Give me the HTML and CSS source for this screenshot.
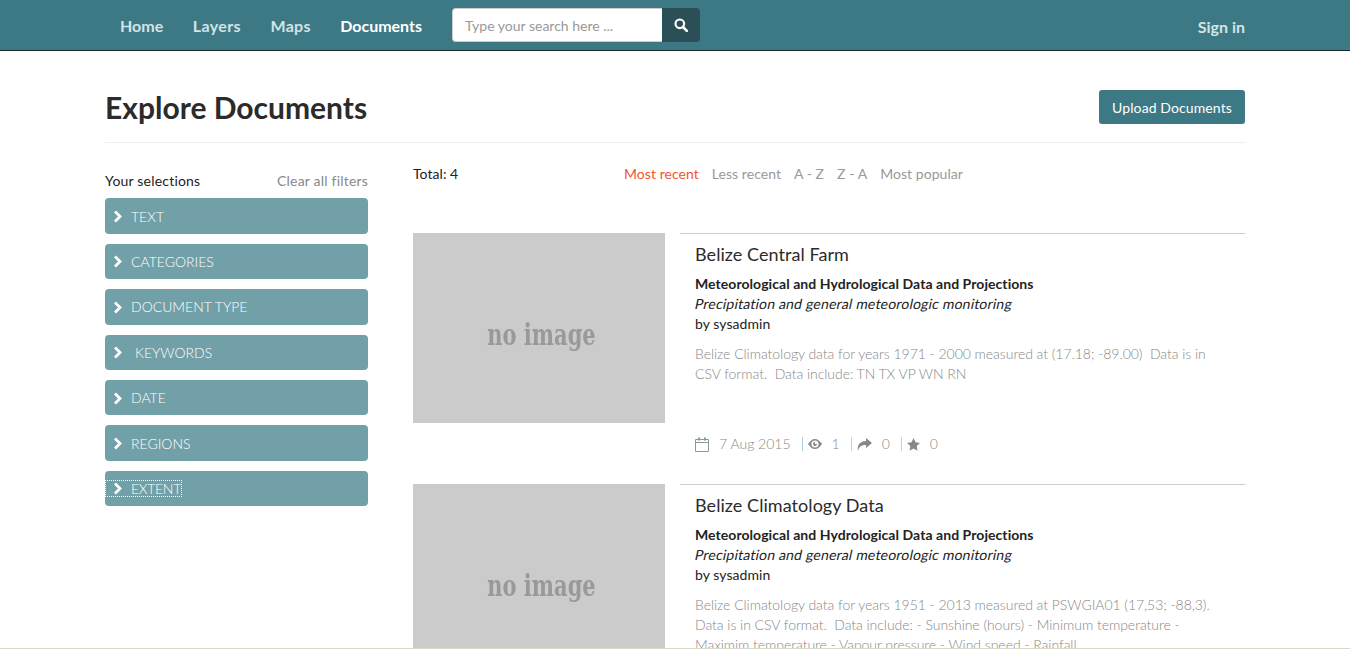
FILE: index.html
```html
<!DOCTYPE html>
<html lang="en">

<head>
    <meta charset="utf-8">
    <title>Explore Documents</title>
    <link rel="stylesheet" href="styles.css">
</head>

<body>
    <header class="topbar">
        <nav class="nav">
            <a href="#">Home</a>
            <a href="#">Layers</a>
            <a href="#">Maps</a>
            <a href="#" class="active">Documents</a>
        </nav>
        <form class="search">
            <input type="text" placeholder="Type your search here ...">
            <button type="button" aria-label="Search">
                <svg width="14" height="14" viewBox="0 0 14 14"><circle cx="5.8" cy="5.8" r="4.3" fill="none" stroke="#fff" stroke-width="2.2"/><path d="M9 9l3.8 3.8" stroke="#fff" stroke-width="2.6" stroke-linecap="round"/></svg>
            </button>
        </form>
        <a href="#" class="signin">Sign in</a>
    </header>

    <main class="page">
        <div class="page-head">
            <h1>Explore Documents</h1>
            <a href="#" class="upload">Upload Documents</a>
        </div>

        <div class="columns">
            <aside class="filters">
                <div class="filters-head">
                    <span>Your selections</span>
                    <a href="#">Clear all filters</a>
                </div>
                <a href="#" class="filter"><svg class="chev" width="10" height="13" viewBox="0 0 10 13"><path d="M2 1.500l5 5-5 5" fill="none" stroke="#fff" stroke-width="2.800"/></svg><span>TEXT</span></a>
                <a href="#" class="filter"><svg class="chev" width="10" height="13" viewBox="0 0 10 13"><path d="M2 1.500l5 5-5 5" fill="none" stroke="#fff" stroke-width="2.800"/></svg><span>CATEGORIES</span></a>
                <a href="#" class="filter"><svg class="chev" width="10" height="13" viewBox="0 0 10 13"><path d="M2 1.500l5 5-5 5" fill="none" stroke="#fff" stroke-width="2.800"/></svg><span>DOCUMENT TYPE</span></a>
                <a href="#" class="filter wide"><svg class="chev" width="10" height="13" viewBox="0 0 10 13"><path d="M2 1.500l5 5-5 5" fill="none" stroke="#fff" stroke-width="2.800"/></svg><span>KEYWORDS</span></a>
                <a href="#" class="filter"><svg class="chev" width="10" height="13" viewBox="0 0 10 13"><path d="M2 1.500l5 5-5 5" fill="none" stroke="#fff" stroke-width="2.800"/></svg><span>DATE</span></a>
                <a href="#" class="filter"><svg class="chev" width="10" height="13" viewBox="0 0 10 13"><path d="M2 1.500l5 5-5 5" fill="none" stroke="#fff" stroke-width="2.800"/></svg><span>REGIONS</span></a>
                <a href="#" class="filter focused"><span class="focus-box"><svg class="chev" width="10" height="13" viewBox="0 0 10 13"><path d="M2 1.500l5 5-5 5" fill="none" stroke="#fff" stroke-width="2.800"/></svg><span>EXTENT</span></span></a>
            </aside>

            <section class="results">
                <div class="toolbar">
                    <span class="total">Total: 4</span>
                    <div class="sort">
                        <a href="#" class="current">Most recent</a>
                        <a href="#">Less recent</a>
                        <a href="#">A - Z</a>
                        <a href="#">Z - A</a>
                        <a href="#">Most popular</a>
                    </div>
                </div>

                <article class="doc">
                    <div class="thumb"><span>no image</span></div>
                    <div class="doc-body">
                        <h2>Belize Central Farm</h2>
                        <div class="meta">
                            <b>Meteorological and Hydrological Data and Projections</b>
                            <span class="slant">Precipitation and general meteorologic monitoring</span>
                            <span>by sysadmin</span>
                        </div>
                        <p class="desc">Belize Climatology data for years 1971 - 2000 measured at (17.18; -89.00)&nbsp; Data is in CSV format.&nbsp; Data include: TN TX VP WN RN</p>
                        <div class="stats">
                            <svg class="cal" width="14" height="15" viewBox="0 0 14 15"><path d="M.5 2.500h13v12H.5zM.5 5.500h13" fill="none" stroke="#8a9a94"/><path d="M3 .5h2v3H3zM9 .5h2v3H9z" fill="#8a9a94"/></svg>
                            <span class="date">7 Aug 2015</span>
                            <span class="sep blue"></span>
                            <svg width="14" height="10" viewBox="0 0 14 10"><path d="M0 5c2-3 4.300-5 7-5s5 2 7 5c-2 3-4.300 5-7 5S2 8 0 5zm7 3.600a3.600 3.600 0 100-7.200 3.600 3.600 0 000 7.200zM7 3a2 2 0 102 2H7z" fill="#888" fill-rule="evenodd"/></svg>
                            <span class="count">1</span>
                            <span class="sep orange"></span>
                            <svg width="15" height="13" viewBox="0 0 15 13"><path d="M9 0l6 5-6 5V7C5 7 2 8 1 13 0 8 2 3.500 9 3z" fill="#888"/></svg>
                            <span class="count">0</span>
                            <span class="sep orange"></span>
                            <svg width="13" height="13" viewBox="0 0 13 13"><path d="M6.500 0l2 4.300 4.500.6-3.300 3.200.8 4.700-4-2.300-4 2.300.8-4.700L0 4.900l4.500-.6z" fill="#888"/></svg>
                            <span class="count">0</span>
                        </div>
                    </div>
                </article>

                <article class="doc">
                    <div class="thumb"><span>no image</span></div>
                    <div class="doc-body">
                        <h2>Belize Climatology Data</h2>
                        <div class="meta">
                            <b>Meteorological and Hydrological Data and Projections</b>
                            <span class="slant">Precipitation and general meteorologic monitoring</span>
                            <span>by sysadmin</span>
                        </div>
                        <p class="desc">Belize Climatology data for years 1951 - 2013 measured at PSWGIA01 (17,53; -88,3). Data is in CSV format.&nbsp; Data include: - Sunshine (hours) - Minimum temperature - Maximim temperature - Vapour pressure - Wind speed - Rainfall</p>
                    </div>
                </article>
            </section>
        </div>
    </main>

    <div class="footer-line"></div>
</body>
</html>
```

FILE: styles.css
```css
* {
    box-sizing: border-box;
    margin: 0;
    padding: 0;
}

html, body {
    height: 100%;
    overflow: hidden;
}

body {
    display: flex;
    flex-direction: column;
    font-family: Lato, "Open Sans", sans-serif;
    font-size: 14px;
    line-height: 20px;
    color: #222;
    background: #fff;
}

a {
    text-decoration: none;
    color: inherit;
}

/* top bar */
.topbar {
    flex: none;
    height: 51px;
    display: flex;
    align-items: flex-start;
    padding: 0 105px 0 120px;
    background: #3d7984;
    border-bottom: 1px solid #1a2a2e;
}

.nav {
    display: flex;
    gap: 29.5px;
    height: 50px;
    align-items: center;
    padding-top: 1px;
    font-size: 16px;
    font-weight: 700;
    letter-spacing: .25px;
    color: #d3e3e6;
}

.nav a:first-child {
    letter-spacing: 0;
}

.nav a:nth-child(2) {
    letter-spacing: .4px;
}

.nav .active {
    letter-spacing: 0;
    color: #fff;
}

.search {
    display: flex;
    margin: 8px 0 0 30px;
}

.search input {
    width: 210px;
    height: 34px;
    padding: 0 12px;
    border: 1px solid #ccc;
    border-right: 0;
    border-radius: 4px 0 0 4px;
    font: 14px Lato, sans-serif;
}

.search input::placeholder {
    color: #999;
}

.search button {
    width: 38px;
    height: 34px;
    border: 0;
    border-radius: 0 4px 4px 0;
    background: #2b4f56;
    display: flex;
    align-items: center;
    justify-content: center;
}

.signin {
    margin-left: auto;
    margin-top: 17px;
    font-size: 16px;
    font-weight: 700;
    color: #d3e3e6;
}

/* page */
.page {
    flex: 1;
    min-height: 0;
    overflow: hidden;
    padding: 0 105px;
}

.page-head {
    height: 92px;
    display: flex;
    justify-content: space-between;
    align-items: center;
    padding-top: 21px;
    border-bottom: 1px solid #eee;
}

.page-head h1 {
    font-size: 30px;
    line-height: 36px;
    font-weight: 700;
    color: #2b2b2b;
}

.upload {
    display: block;
    width: 146px;
    height: 34px;
    line-height: 36px;
    text-align: center;
    letter-spacing: .1px;
    border-radius: 3px;
    background: #3d7984;
    color: #fff;
}

.columns {
    display: flex;
    gap: 45px;
}

/* filters */
.filters {
    flex: none;
    width: 263px;
    padding-top: 28px;
}

.filters-head {
    display: flex;
    justify-content: space-between;
    margin-bottom: 7.4px;
    letter-spacing: .2px;
}

.filters-head a {
    color: #888;
}

.filter {
    display: flex;
    align-items: center;
    height: 35.4px;
    margin-bottom: 10px;
    padding: 1px 0 0 8px;
    border-radius: 4px;
    background: #72a0a8;
    color: #fff;
    font-weight: 300;
}

.chev {
    flex: none;
    margin-right: 8px;
}

.filter.wide .chev {
    margin-right: 12px;
}

.focus-box {
    display: flex;
    align-items: center;
    height: 15px;
    margin-left: -7px;
    padding-left: 7px;
    letter-spacing: -.3px;
    outline: 1px dotted #fff;
}

/* results */
.results {
    flex: 1;
    min-width: 0;
}

.toolbar {
    display: flex;
    height: 90px;
    padding-top: 21px;
    letter-spacing: .05px;
}

.total {
    width: 211px;
}

.sort {
    display: flex;
    gap: 13px;
    color: #999;
}

.sort .current {
    color: #f0552d;
}

.doc {
    display: flex;
    height: 251px;
}

.thumb {
    flex: none;
    width: 252px;
    height: 190px;
    padding-left: 4px;
    display: flex;
    align-items: center;
    justify-content: center;
    background: #cbcbcb;
}

.thumb span {
    font-family: "DejaVu Serif", serif;
    font-size: 30px;
    font-weight: 700;
    color: #999;
    filter: blur(.6px);
    transform: scaleX(.7);
    padding-top: 14px;
}

.doc-body {
    flex: 1;
    margin-left: 15px;
    padding: 0 25px 0 15px;
    border-top: 1px solid #ccc;
}

.doc-body h2 {
    margin-top: 9px;
    font-size: 18px;
    line-height: 22px;
    font-weight: 400;
    letter-spacing: .06px;
    color: #2b2b2b;
}

.meta {
    display: flex;
    flex-direction: column;
    align-items: flex-start;
    margin-top: 9px;
    letter-spacing: .06px;
    color: #222;
}

.meta b {
    font-weight: 700;
}

/* the reference slants the upright face */
.slant {
    margin-left: -2px;
    letter-spacing: .2px;
    transform: skewX(-12deg);
    transform-origin: left bottom;
}

.desc {
    margin-top: 10px;
    height: 70px;
    font-weight: 300;
    letter-spacing: -.04px;
    color: #888;
}

.stats {
    display: flex;
    align-items: center;
    height: 20px;
    margin-top: 20px;
    font-weight: 300;
    color: #888;
}

.date {
    margin: 0 11px 0 10px;
}

.count {
    margin: 0 11px 0 10px;
}

.sep {
    width: 1px;
    height: 14px;
    margin-right: 5px;
}

.sep.blue {
    background: #a9cfe0;
}

.sep.orange {
    background: #f6c79a;
}

.footer-line {
    flex: none;
    height: 2px;
    border-top: 1px solid #d8d8c8;
    background: #fff;
}
```
